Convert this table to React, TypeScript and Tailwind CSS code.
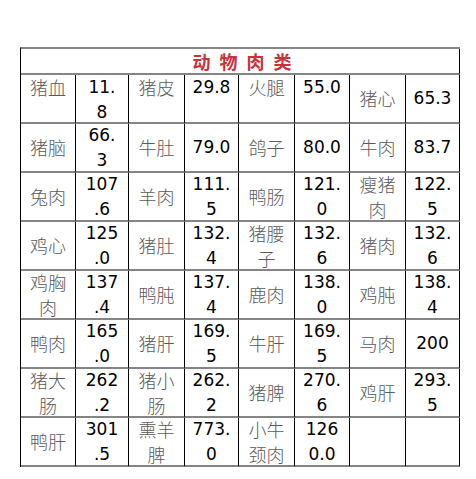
import React from "react";

type Cell = { lines: string[]; kind: "cn" | "num"; top?: boolean };

const cn = (s: string, top = false): Cell => ({ lines: s.split("/"), kind: "cn", top });
const nm = (s: string, top = false): Cell => ({ lines: s.split("/"), kind: "num", top });
const empty: Cell = { lines: [], kind: "num" };

const rows: Cell[][] = [
  [cn("猪血", true), nm("11./8", true), cn("猪皮", true), nm("29.8", true), cn("火腿", true), nm("55.0", true), cn("猪心"), nm("65.3")],
  [cn("猪脑"), nm("66./3"), cn("牛肚"), nm("79.0"), cn("鸽子"), nm("80.0"), cn("牛肉"), nm("83.7")],
  [cn("兔肉"), nm("107/.6"), cn("羊肉"), nm("111./5"), cn("鸭肠"), nm("121./0"), cn("瘦猪/肉"), nm("122./5")],
  [cn("鸡心"), nm("125/.0"), cn("猪肚"), nm("132./4"), cn("猪腰/子"), nm("132./6"), cn("猪肉"), nm("132./6")],
  [cn("鸡胸/肉"), nm("137/.4"), cn("鸭肫"), nm("137./4"), cn("鹿肉"), nm("138./0"), cn("鸡肫"), nm("138./4")],
  [cn("鸭肉"), nm("165/.0"), cn("猪肝"), nm("169./5"), cn("牛肝"), nm("169./5"), cn("马肉"), nm("200")],
  [cn("猪大/肠"), nm("262/.2"), cn("猪小/肠"), nm("262./2"), cn("猪脾"), nm("270./6"), cn("鸡肝"), nm("293./5")],
  [cn("鸭肝"), nm("301/.5"), cn("熏羊/脾"), nm("773./0"), cn("小牛/颈肉"), nm("126/0.0"), empty, empty],
];

export default function App() {
  return (
    <div className="w-[476px] h-[479px] bg-white pt-[47px] pl-[20px]">
      <div className="w-[440px] border-t-2 border-t-[#858585] border-l border-l-black grid grid-cols-[55px_53px_56px_54px_56px_55px_56px_54px]">
        <div className="col-span-8 h-[26px] border-b-2 border-b-[#858585] border-r border-r-black flex items-center justify-center pl-[13px]">
          <span
            className="text-[18px] font-bold text-[#c8323a] tracking-[9px] leading-none"
            style={{ fontFamily: '"Noto Sans CJK SC", sans-serif' }}
          >
            动物肉类
          </span>
        </div>
        {rows.map((row, ri) =>
          row.map((c, ci) => (
            <div
              key={`${ri}-${ci}`}
              className={`h-[49px] border-b-2 border-b-[#858585] border-r border-r-black flex flex-col items-center text-center ${
                c.top ? "justify-start" : "justify-center"
              }`}
            >
              {c.lines.map((l, li) =>
                c.kind === "cn" ? (
                  <div
                    key={li}
                    className="text-[18px] leading-[25px] text-[#5a5a5a] whitespace-nowrap"
                    style={{ fontFamily: '"Noto Sans CJK SC", sans-serif', fontWeight: 300 }}
                  >
                    {l}
                  </div>
                ) : (
                  <div
                    key={li}
                    className="text-[17px] leading-[25px] text-black whitespace-nowrap"
                    style={{ fontFamily: '"DejaVu Sans", sans-serif' }}
                  >
                    {l}
                  </div>
                )
              )}
            </div>
          ))
        )}
      </div>
    </div>
  );
}
